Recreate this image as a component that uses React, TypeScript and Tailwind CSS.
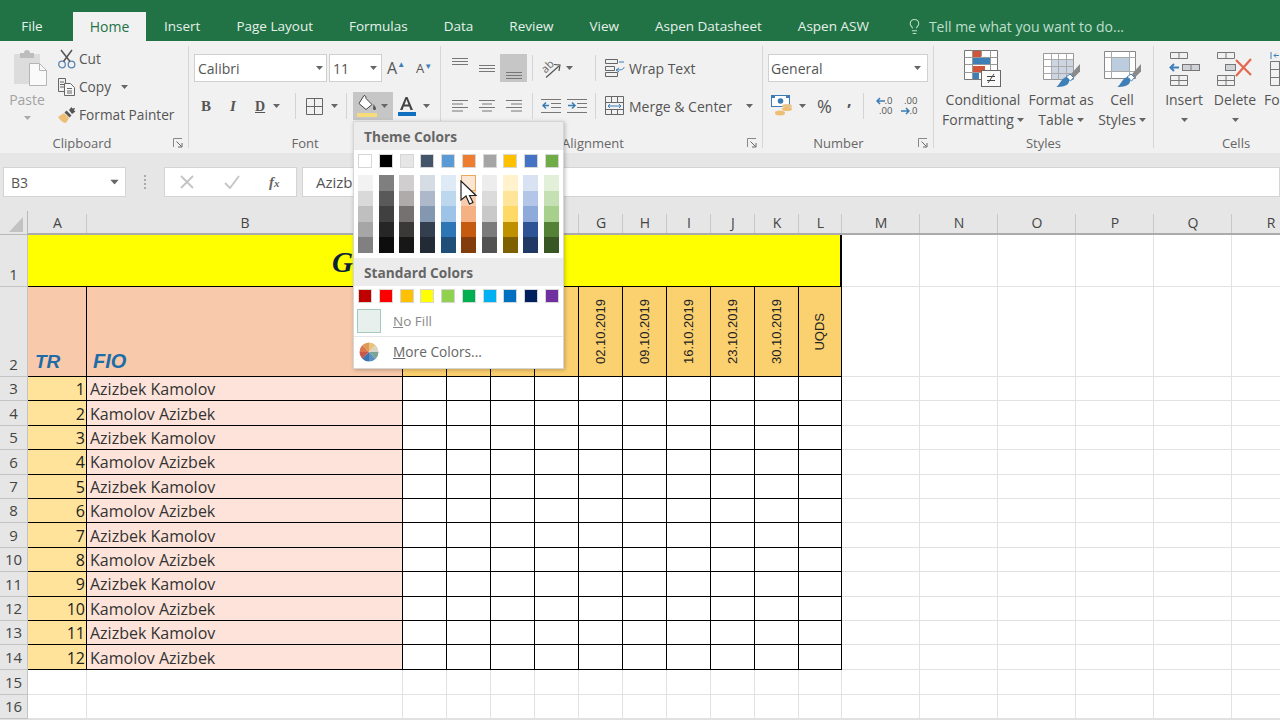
import { Lightbulb } from "lucide-react";
import type { ReactNode } from "react";

const tabs = ["Insert", "Page Layout", "Formulas", "Data", "Review", "View", "Aspen Datasheet", "Aspen ASW"];

const columns = ["A", "B", "C", "D", "E", "F", "G", "H", "I", "J", "K", "L", "M", "N", "O", "P", "Q", "R"];
const dates = ["02.10.2019", "09.10.2019", "16.10.2019", "23.10.2019", "30.10.2019", "UQDS"];
const blankCols = [0, 1, 2, 3, 4, 5, 6, 7, 8, 9];
const outerCols = [0, 1, 2, 3, 4, 5];
const dataRows = [1, 2, 3, 4, 5, 6, 7, 8, 9, 10, 11, 12];

const themeTop = ["bg-[#ffffff]", "bg-[#000000]", "bg-[#e7e6e6]", "bg-[#44546a]", "bg-[#5b9bd5]", "bg-[#ed7d31]", "bg-[#a5a5a5]", "bg-[#ffc000]", "bg-[#4472c4]", "bg-[#70ad47]"];
const themeShades = [
  ["bg-[#f2f2f2]", "bg-[#d9d9d9]", "bg-[#bfbfbf]", "bg-[#a6a6a6]", "bg-[#808080]"],
  ["bg-[#7f7f7f]", "bg-[#595959]", "bg-[#404040]", "bg-[#262626]", "bg-[#0d0d0d]"],
  ["bg-[#d0cece]", "bg-[#afabab]", "bg-[#767171]", "bg-[#3b3838]", "bg-[#181717]"],
  ["bg-[#d6dce4]", "bg-[#adb9ca]", "bg-[#8497b0]", "bg-[#333f4f]", "bg-[#222b35]"],
  ["bg-[#deeaf6]", "bg-[#bdd7ee]", "bg-[#9dc3e6]", "bg-[#2e75b5]", "bg-[#1f4e79]"],
  ["bg-[#fbe5d5]", "bg-[#f7cbac]", "bg-[#f4b183]", "bg-[#c55a11]", "bg-[#833c0b]"],
  ["bg-[#ededed]", "bg-[#dbdbdb]", "bg-[#c9c9c9]", "bg-[#7b7b7b]", "bg-[#525252]"],
  ["bg-[#fff2cc]", "bg-[#fee599]", "bg-[#ffd965]", "bg-[#bf9000]", "bg-[#7f6000]"],
  ["bg-[#d9e2f3]", "bg-[#b4c6e7]", "bg-[#8eaadb]", "bg-[#2f5496]", "bg-[#1f3864]"],
  ["bg-[#e2efd9]", "bg-[#c5e0b3]", "bg-[#a8d08d]", "bg-[#538135]", "bg-[#375623]"],
];
const standard = ["bg-[#c00000]", "bg-[#ff0000]", "bg-[#ffc000]", "bg-[#ffff00]", "bg-[#92d050]", "bg-[#00b050]", "bg-[#00b0f0]", "bg-[#0070c0]", "bg-[#002060]", "bg-[#7030a0]"];

function Caret({ className = "" }: { className?: string }) {
  return (
    <svg width="7" height="4" viewBox="0 0 7 4" className={"shrink-0 " + className}>
      <path d="M0 0h7L3.5 4z" fill="#666" />
    </svg>
  );
}

function Sep({ className = "" }: { className?: string }) {
  return <div className={"w-px h-[26px] bg-[#d4d4d4] shrink-0 " + className} />;
}

function Launcher({ className = "" }: { className?: string }) {
  return (
    <svg width="10" height="10" viewBox="0 0 10 10" className={"absolute " + className}>
      <path d="M.5 9V.5H9" fill="none" stroke="#888" />
      <path d="M3.5 3.5L8.5 8.5M9 5v4H5" fill="none" stroke="#666" />
    </svg>
  );
}

function Group({ className, label, labelClass = "", children }: { className: string; label: string; labelClass?: string; children: ReactNode }) {
  return (
    <div className={"relative flex flex-col shrink-0 h-[102px] border-r border-[#d6d6d6] " + className}>
      <div className="flex-1 min-h-0">{children}</div>
      <div className={"relative h-[18px] -mb-[4px] leading-[18px] text-[13px] text-[#666] text-center " + labelClass}>{label}</div>
    </div>
  );
}

function AlignLines({ kind, y = 0 }: { kind: "left" | "center" | "right" | "full"; y?: number }) {
  const rows = kind === "left"
    ? [[0, 16], [0, 11], [0, 16], [0, 11]]
    : kind === "center"
      ? [[0, 16], [3, 13], [0, 16], [3, 13]]
      : kind === "right"
        ? [[0, 16], [5, 16], [0, 16], [5, 16]]
        : [[0, 16], [0, 16], [0, 16]];
  return (
    <svg width="18" height="16" viewBox="0 0 18 16" className="shrink-0">
      {rows.map((r, i) => (
        <path key={i} d={`M${r[0] + 1} ${y + 2.5 + i * (kind === "full" ? 3 : 3.5)}H${r[1] + 1}`} stroke="#777" strokeWidth="1" />
      ))}
    </svg>
  );
}

function PasteIcon() {
  return (
    <svg width="36" height="40" viewBox="0 0 36 40">
      <rect x="1" y="5" width="26" height="30" fill="#dcdcdc" />
      <path d="M7 9V4h4a3 3 0 0 1 6 0h4v5z" fill="#bdbdbd" />
      <path d="M16.500 14.500h10l7 7v15h-17z" fill="#fafafa" stroke="#b5b5b5" />
      <path d="M26.500 14.500v7h7" fill="none" stroke="#b5b5b5" />
    </svg>
  );
}

function CutIcon() {
  return (
    <svg width="20" height="20" viewBox="0 0 20 20">
      <circle cx="5" cy="15.500" r="3.300" fill="none" stroke="#5b86b0" strokeWidth="1.300" />
      <circle cx="14.500" cy="15.500" r="3.300" fill="none" stroke="#5b86b0" strokeWidth="1.300" />
      <path d="M6.500 12.500L15 1M13 12.500L4 1" stroke="#555" strokeWidth="1.500" />
    </svg>
  );
}

function CopyIcon() {
  return (
    <svg width="20" height="20" viewBox="0 0 20 20" fill="none" stroke="#666">
      <path d="M1.500 1.500h7v13h-7zM3 5h4M3 7.500h4M3 10h4" />
      <path d="M7.500 6.500h6l4 4v8h-10z" fill="#f6f6f6" />
      <path d="M10 11.500h5M10 14h5M10 16h5" />
    </svg>
  );
}

function PainterIcon() {
  return (
    <svg width="20" height="18" viewBox="0 0 20 18">
      <path d="M1 11l6-4 5 5-3 5c-3 0-6-3-8-6z" fill="#edbf74" />
      <path d="M7.500 6.500l5 5 2-2-5-5z" fill="#555" />
      <path d="M12 4l2.500-3 1 1.500L18 2l-1 2.500 1.500 1L15 8z" fill="#555" />
    </svg>
  );
}

function BorderIcon() {
  return (
    <svg width="17" height="17" viewBox="0 0 17 17" fill="none" stroke="#666">
      <path d="M.5.500h16v16H.5zM8.500.5v16M.5 8.500h16" />
    </svg>
  );
}

function FillIcon() {
  return (
    <svg width="22" height="24" viewBox="0 0 22 24">
      <path d="M8 1.500c1.500 0 2 1 2 3l6 6-6 5-7-6z" fill="#fff" stroke="#444" />
      <path d="M17.500 10c1.500 2 2.500 3.500 2.500 4.500a1.500 1.500 0 0 1-3 0c0-1 .5-2.500.5-4.500z" fill="#555" />
      <rect x="1" y="19" width="20" height="4" fill="#f7dc7c" />
    </svg>
  );
}

function FontColorIcon() {
  return (
    <svg width="20" height="22" viewBox="0 0 20 22">
      <path d="M3 15L8.500 2h2L16 15h-2.500l-1.300-3.500H6.800L5.500 15zM7.600 9.500h3.800L9.500 4.500z" fill="#444" />
      <rect x="1" y="17" width="18" height="4" fill="#0f6fc0" />
    </svg>
  );
}

function OrientIcon() {
  return (
    <svg width="22" height="20" viewBox="0 0 22 20" fill="none" className="overflow-visible">
      <text x="1" y="13" transform="rotate(-45 6 10)" fontSize="11" fill="#666" stroke="none">ab</text>
      <path d="M5 19.500L18 8" stroke="#555" strokeWidth="1.200" />
      <path d="M13 6.500l6 .5-1 6" stroke="#555" strokeWidth="1.200" />
    </svg>
  );
}

function IndentIcon({ flip }: { flip?: boolean }) {
  return (
    <svg width="20" height="18" viewBox="0 0 20 18" fill="none">
      <path d="M0 2.500h20M10 6.500h10M10 10.500h10M0 15.500h20" stroke="#777" />
      {flip ? (
        <path d="M1 8.500h6M5 5.500l3 3-3 3" stroke="#3b7cb5" strokeWidth="1.500" />
      ) : (
        <path d="M8 8.500H2M5 5.500l-3 3 3 3" stroke="#3b7cb5" strokeWidth="1.500" />
      )}
    </svg>
  );
}

function WrapIcon() {
  return (
    <svg width="20" height="20" viewBox="0 0 20 20" fill="none" stroke="#666">
      <path d="M.5 1.500h12v4H.5zM.5 8.500h9v4h-9zM.5 14.500h12v4H.5z" />
      <path d="M14 4h5M19 9c0 2-2 3-7 3M14 10l-3 2 3 2" stroke="#3b7cb5" />
    </svg>
  );
}

function MergeIcon() {
  return (
    <svg width="20" height="20" viewBox="0 0 20 20" fill="none" stroke="#666">
      <path d="M.5.500h18v18H.5zM.5 6.500h18M.5 13.500h18M6.500.5v6M6.500 13.500v5M12.500.5v6M12.500 13.500v5" />
      <path d="M3 10h13M5 8l-2 2 2 2M14 8l2 2-2 2" stroke="#3b7cb5" />
    </svg>
  );
}

function AccountingIcon() {
  return (
    <svg width="22" height="22" viewBox="0 0 22 22">
      <rect x=".5" y=".5" width="18" height="11" fill="#fff" stroke="#3b7cb5" />
      <circle cx="9.500" cy="6" r="2.800" fill="#3b7cb5" />
      <path d="M1 1h3v2H1zM15 1h3v2h-3z" fill="#3b7cb5" />
      <ellipse cx="16" cy="11" rx="5" ry="2" fill="#e8c68b" />
      <ellipse cx="16" cy="14" rx="5" ry="2" fill="#edbf74" />
      <ellipse cx="9" cy="18" rx="5" ry="2.500" fill="#edbf74" />
    </svg>
  );
}

function DecimalIcon({ more }: { more?: boolean }) {
  const arrow = more ? "M9 4H1M4 1L1 4l3 3" : "M0 4h8M5 1l3 3-3 3";
  const top = more ? ".0" : ".00";
  const bottom = more ? ".00" : ".0";
  return (
    <div className="w-[20px] h-[20px] shrink-0 text-[9.500px] text-[#555] flex flex-col items-end">
      <div className="h-[10px] leading-[10px] flex items-center">
        {more && (
          <svg width="9" height="8" viewBox="0 0 9 8" fill="none" stroke="#3b7cb5" strokeWidth="1.500">
            <path d={arrow} />
          </svg>
        )}
        {top}
      </div>
      <div className="h-[10px] leading-[10px] flex items-center">
        {!more && (
          <svg width="9" height="8" viewBox="0 0 9 8" fill="none" stroke="#3b7cb5" strokeWidth="1.500">
            <path d={arrow} />
          </svg>
        )}
        {bottom}
      </div>
    </div>
  );
}

function ConditionalIcon() {
  return (
    <svg width="40" height="38" viewBox="0 0 40 38">
      <path d="M1.500.500h33v29h-33z" fill="#fff" stroke="#777" />
      <rect x="10" y="1" width="8" height="6" fill="#d2553a" />
      <rect x="10" y="8" width="17" height="6" fill="#3f7fb8" />
      <rect x="10" y="16" width="12" height="6" fill="#d2553a" />
      <rect x="10" y="23" width="6" height="6" fill="#3f7fb8" />
      <path d="M1.500 7.500h33M1.500 14.500h33M1.500 22.500h33M9.500.5v29M18.500.5v6M27.500.5v29" fill="none" stroke="#999" />
      <rect x="18.500" y="20.500" width="19" height="16" fill="#fafafa" stroke="#666" />
      <path d="M24 26.500h8M24 30.500h8M31 24l-6 9" stroke="#444" fill="none" />
    </svg>
  );
}

function BrushTail() {
  return (
    <>
      <path d="M29 24l9-10 1.500 6-8 8z" fill="#8a8a8a" />
      <path d="M24 27l4-3 3.500 3.500-3 3.500z" fill="#fff" stroke="#3f7fb8" />
      <path d="M14 37c3-1 4-6 8-9 3-2 6 1 5 4-1 4-7 5-13 5z" fill="#3f7fb8" />
    </>
  );
}

function TableStyleIcon() {
  return (
    <svg width="38" height="38" viewBox="0 0 38 38">
      <path d="M1.500 3.500h30v26h-30z" fill="#fff" stroke="#999" />
      <rect x="9" y="10" width="22" height="19" fill="#cdd4e2" />
      <path d="M1.500 9.500h30M1.500 16.500h30M1.500 23.500h30M9.500 3.500v26M16.500 3.500v26M24.500 3.500v26" fill="none" stroke="#aaa" />
      <BrushTail />
    </svg>
  );
}

function CellStyleIcon() {
  return (
    <svg width="38" height="38" viewBox="0 0 38 38">
      <path d="M1.500 1.500h31v27h-31z" fill="#fff" stroke="#888" />
      <rect x="8" y="7" width="18" height="14" fill="#bdcde0" />
      <path d="M8.500 1.500v27M26.500 1.500v27M1.500 7.500h31M1.500 21.500h31" fill="none" stroke="#aaa" />
      <BrushTail />
    </svg>
  );
}

function InsertIcon() {
  return (
    <svg width="34" height="36" viewBox="0 0 34 36" fill="none">
      <path d="M3.500 1.500h17v6h-17zM12 1.500v6M3.500 24.500h17v10h-17zM3.500 29.500h17M12 24.500v10" stroke="#777" />
      <rect x="15.500" y="13.500" width="17" height="6" fill="#cfd3d8" stroke="#777" />
      <path d="M24 13.500v6" stroke="#777" />
      <path d="M12 16.500H4M7 13l-3.500 3.500L7 20" stroke="#3f7fb8" strokeWidth="2" />
    </svg>
  );
}

function DeleteIcon() {
  return (
    <svg width="38" height="36" viewBox="0 0 38 36" fill="none">
      <path d="M1.500 1.500h17v6h-17zM10 1.500v6M1.500 24.500h17v10h-17zM1.500 29.500h17M10 24.500v10" stroke="#777" />
      <rect x="9.500" y="13.500" width="10" height="6" fill="#cfd3d8" stroke="#777" />
      <path d="M20 9l15 15M35 8L20 25" stroke="#e2684f" strokeWidth="2.200" />
    </svg>
  );
}

function FormatCellsIcon() {
  return (
    <svg width="30" height="38" viewBox="0 0 30 38" fill="none">
      <path d="M1 2v7M4 5.500h5M4 5.500l2-2M4 5.500l2 2" stroke="#3f7fb8" />
      <path d="M.5 11.500h28v24H.5zM.5 19.500h28M.5 27.500h28M9.500 11.500v24" stroke="#777" />
    </svg>
  );
}

function BigButton({ className, icon, lines, caretLine }: { className: string; icon: ReactNode; lines: string[]; caretLine?: boolean }) {
  return (
    <div className={"flex flex-col items-center shrink-0 whitespace-nowrap " + className}>
      <div className="h-[38px] mt-[4px] mb-[2px] flex items-center justify-center">{icon}</div>
      {lines.map((line, i) => (
        <div key={i} className="h-[20px] leading-[20px] flex items-center gap-[3px]">
          {line}
          {i === lines.length - 1 && caretLine && <Caret />}
        </div>
      ))}
      {!caretLine && (
        <div className="h-[20px] flex items-center">
          <Caret />
        </div>
      )}
    </div>
  );
}

function Ribbon() {
  return (
    <div className="flex h-[112px] pt-[5px] bg-[#f1f1f1] text-[14px] text-[#555] overflow-hidden">
      <Group className="w-[189px]" label="Clipboard" labelClass="pr-[24px]">
        <div className="flex">
          <div className="w-[52px] flex flex-col items-center pl-[3px] text-[#a3a3a3]">
            <div className="h-[40px] mt-[3px] ml-[7px]">
              <PasteIcon />
            </div>
            <div className="h-[20px] leading-[20px] mt-[1px] -ml-[1px]">Paste</div>
            <Caret className="mt-[6px] opacity-50" />
          </div>
          <div className="flex flex-col -mt-[1px] ml-[5px] text-[13.700px]">
            <div className="h-[28px] flex items-center gap-[2px]">
              <CutIcon />
              Cut
            </div>
            <div className="h-[28px] flex items-center gap-[2px]">
              <CopyIcon />
              Copy
              <Caret className="ml-[8px]" />
            </div>
            <div className="h-[28px] flex items-center gap-[2px]">
              <PainterIcon />
              Format Painter
            </div>
          </div>
        </div>
        <Launcher className="left-[173px] top-[92px]" />
      </Group>

      <Group className="w-[252px]" label="Font" labelClass="pr-[19px]">
        <div className="pt-[8px] flex flex-col gap-[10px]">
          <div className="flex h-[28px] items-center pl-[5px]">
            <div className="w-[133px] h-[28px] bg-white border border-[#d0d0d0] flex items-center justify-between pl-[3px] pr-[3px]">
              Calibri
              <Caret />
            </div>
            <div className="w-[53px] h-[28px] ml-[2px] bg-white border border-[#d0d0d0] flex items-center justify-between pl-[3px] pr-[4px]">
              11
              <Caret />
            </div>
            <div className="ml-[5px] text-[16px] leading-none flex items-start">
              A<span className="text-[8px] text-[#3f7fb8] leading-none">▲</span>
            </div>
            <div className="ml-[11px] text-[13px] leading-none flex items-start">
              A<span className="text-[8px] text-[#3f7fb8] leading-none">▼</span>
            </div>
          </div>
          <div className="flex h-[28px] items-center pl-[4px]">
            <div className="w-[26px] text-center font-bold font-['Liberation_Serif',serif] text-[15px]">B</div>
            <div className="w-[28px] text-center italic font-bold font-['Liberation_Serif',serif] text-[15px]">I</div>
            <div className="w-[48px] flex items-center pl-[8px] gap-[8px]">
              <span className="font-bold underline text-[14px] font-['Liberation_Serif',serif]">D</span>
              <Caret />
            </div>
            <Sep />
            <div className="w-[50px] flex items-center pl-[10px] gap-[8px]">
              <BorderIcon />
              <Caret />
            </div>
            <Sep className="mr-[6px]" />
            <div className="w-[40px] h-[28px] bg-[#c6c6c6] flex items-center pl-[3px] gap-[3px]">
              <FillIcon />
              <Caret />
            </div>
            <div className="flex items-center pl-[4px] gap-[6px]">
              <FontColorIcon />
              <Caret />
            </div>
          </div>
        </div>
      </Group>

      <Group className="w-[322px]" label="Alignment" labelClass="pr-[17px]">
        <div className="pt-[8px] flex flex-col gap-[10px]">
          <div className="flex h-[28px] items-center pl-[5px]">
            <div className="w-[27px] h-[28px] flex items-start justify-center pt-[2px]">
              <AlignLines kind="full" />
            </div>
            <div className="w-[27px] h-[28px] flex items-center justify-center">
              <AlignLines kind="full" y={3} />
            </div>
            <div className="w-[27px] h-[28px] bg-[#c6c6c6] flex items-end justify-center">
              <AlignLines kind="full" y={4} />
            </div>
            <Sep className="ml-[5px]" />
            <div className="w-[62px] flex items-center pl-[8px] gap-[3px]">
              <OrientIcon />
              <Caret />
            </div>
            <Sep />
            <div className="ml-[9px] flex items-center gap-[4px]">
              <WrapIcon />
              Wrap Text
            </div>
          </div>
          <div className="flex h-[28px] items-center pl-[5px]">
            <div className="w-[27px] flex justify-center">
              <AlignLines kind="left" />
            </div>
            <div className="w-[27px] flex justify-center">
              <AlignLines kind="center" />
            </div>
            <div className="w-[27px] flex justify-center">
              <AlignLines kind="right" />
            </div>
            <Sep className="ml-[5px]" />
            <div className="w-[62px] flex items-center pl-[8px] gap-[6px]">
              <IndentIcon />
              <IndentIcon flip />
            </div>
            <Sep />
            <div className="ml-[9px] flex items-center gap-[4px]">
              <MergeIcon />
              Merge &amp; Center
              <Caret className="ml-[10px]" />
            </div>
          </div>
        </div>
        <Launcher className="left-[306px] top-[92px]" />
      </Group>

      <Group className="w-[171px]" label="Number" labelClass="pr-[19px]">
        <div className="pt-[8px] flex flex-col gap-[10px]">
          <div className="flex h-[28px] items-center pl-[5px]">
            <div className="w-[160px] h-[28px] bg-white border border-[#d0d0d0] flex items-center justify-between pl-[2px] pr-[6px]">
              General
              <Caret />
            </div>
          </div>
          <div className="flex h-[28px] items-center pl-[8px]">
            <AccountingIcon />
            <Caret className="ml-[6px]" />
            <span className="ml-[11px] text-[18px] leading-none">%</span>
            <span className="ml-[15px] text-[16px] font-bold leading-none -mt-[12px]">,</span>
            <Sep className="ml-[12px]" />
            <div className="ml-[8px]">
              <DecimalIcon more />
            </div>
            <div className="ml-[5px]">
              <DecimalIcon />
            </div>
          </div>
        </div>
        <Launcher className="left-[155px] top-[92px]" />
      </Group>

      <Group className="w-[220px]" label="Styles">
        <div className="flex pl-[5px]">
          <BigButton className="w-[88px]" icon={<ConditionalIcon />} lines={["Conditional", "Formatting"]} caretLine />
          <BigButton className="w-[68px]" icon={<TableStyleIcon />} lines={["Format as", "Table"]} caretLine />
          <BigButton className="w-[54px]" icon={<CellStyleIcon />} lines={["Cell", "Styles"]} caretLine />
        </div>
      </Group>

      <Group className="w-[164px] border-r-0" label="Cells">
        <div className="flex pl-[8px]">
          <BigButton className="w-[44px]" icon={<InsertIcon />} lines={["Insert"]} />
          <BigButton className="w-[44px] ml-[7px]" icon={<DeleteIcon />} lines={["Delete"]} />
          <div className="flex flex-col ml-[7px] items-start">
            <div className="h-[38px] mt-[4px] mb-[2px] pl-[6px] flex items-center">
              <FormatCellsIcon />
            </div>
            <div className="h-[20px] leading-[20px]">Format</div>
          </div>
        </div>
      </Group>
    </div>
  );
}

function FormulaBar() {
  return (
    <div className="bg-[#e6e6e6] h-[58px] pt-[14px] text-[#555]">
      <div className="h-[30px] flex items-stretch">
        <div className="ml-[3px] w-[123px] bg-white border border-[#d4d4d4] flex items-center justify-between pl-[7px] pr-[7px] text-[14px]">
          B3
          <Caret className="scale-125" />
        </div>
        <div className="w-[38px] flex flex-col items-center justify-center gap-[2px]">
          <div className="w-[2px] h-[2px] bg-[#aaa]" />
          <div className="w-[2px] h-[2px] bg-[#aaa]" />
          <div className="w-[2px] h-[2px] bg-[#aaa]" />
          <div className="w-[2px] h-[2px] bg-[#aaa]" />
        </div>
        <div className="w-[133px] bg-white border border-[#d4d4d4] flex items-center pl-[15px]">
          <svg width="14" height="14" viewBox="0 0 14 14" fill="none" stroke="#c4c4c4" strokeWidth="1.800">
            <path d="M1 1l12 12M13 1L1 13" />
          </svg>
          <svg width="16" height="14" viewBox="0 0 16 14" fill="none" stroke="#c4c4c4" strokeWidth="1.800" className="ml-[30px]">
            <path d="M1 8l5 5 9-12" />
          </svg>
          <span className="ml-[29px] italic font-bold text-[15px] text-[#666] font-['Liberation_Serif',serif]">
            f<span className="text-[11px]">x</span>
          </span>
        </div>
        <div className="ml-[5px] flex-1 bg-white border border-[#d4d4d4] flex items-center pl-[13px] text-[15px]">Azizbek Kamolov</div>
      </div>
    </div>
  );
}

function RowHead({ n }: { n: number }) {
  return <div className="bg-[#e6e6e6] border-r border-b border-[#c4c4c4] flex items-end justify-center text-[15px] leading-[23px] text-[#444]">{n}</div>;
}

function Sheet() {
  return (
    <div className="grid w-[1310px] grid-cols-[28px_59px_316px_44px_44px_44px_44px_44px_44px_44px_44px_44px_43px_78px_78px_78px_78px_78px_78px] grid-rows-[24px_52px_90px_repeat(12,24.42px)_25px_24px] text-[16px] text-[#333]">
      <div className="bg-[#e6e6e6] border-r border-b border-[#b8b8b8] flex items-end justify-end pr-[4px] pb-[2px]">
        <svg width="14" height="15" viewBox="0 0 14 15">
          <path d="M14 0v15H0z" fill="#c2c2c2" />
        </svg>
      </div>
      {columns.map((c) => (
        <div key={c} className="bg-[#e6e6e6] border-b-2 border-[#ababab] flex items-center justify-center relative text-[14px] text-[#444]">
          {c}
          <div className="absolute right-0 top-[3px] bottom-0 w-px bg-[#c8c8c8]" />
        </div>
      ))}

      <RowHead n={1} />
      <div className="col-span-12 bg-[#ffff00] border-b border-black border-r-2 flex items-center pl-[304px] pt-[3px]">
        <span className="font-['Liberation_Serif',serif] font-bold italic text-[29px] leading-none text-[#0b1f3a]">G</span>
      </div>
      {outerCols.map((i) => (
        <div key={i} className="bg-white border-r border-b border-[#e2e2e2]" />
      ))}

      <RowHead n={2} />
      <div className="bg-[#f8c9ab] border-r border-b border-black flex items-end pl-[7px] font-['Liberation_Sans',sans-serif] font-bold italic text-[19px] text-[#1c6ca8]">TR</div>
      <div className="bg-[#f8c9ab] border-r border-b border-black flex items-end pl-[6px] font-['Liberation_Sans',sans-serif] font-bold italic text-[20px] text-[#1c6ca8]">FIO</div>
      {[0, 1, 2, 3].map((i) => (
        <div key={i} className="bg-[#fbd06f] border-r border-b border-black" />
      ))}
      {dates.map((d) => (
        <div key={d} className="bg-[#fbd06f] border-r border-b border-black flex items-center justify-center font-['Liberation_Sans',sans-serif] text-[13px] text-[#222]">
          <span className="[writing-mode:vertical-rl] rotate-180">{d}</span>
        </div>
      ))}
      {outerCols.map((i) => (
        <div key={i} className="bg-white border-r border-b border-[#e2e2e2]" />
      ))}

      {dataRows.map((n) => (
        <div key={n} className="contents">
          <RowHead n={n + 2} />
          <div className="bg-[#ffe39b] border-r border-b border-black flex items-center justify-end pr-[1px] pt-[1px] text-[#222]">{n}</div>
          <div className="bg-[#fde3d9] border-r border-b border-black flex items-center pl-[3px] pt-[1px]">{n % 2 === 1 ? "Azizbek Kamolov" : "Kamolov Azizbek"}</div>
          {blankCols.map((i) => (
            <div key={i} className="bg-white border-r border-b border-black" />
          ))}
          {outerCols.map((i) => (
            <div key={i} className="bg-white border-r border-b border-[#e2e2e2]" />
          ))}
        </div>
      ))}

      {[15, 16].map((n) => (
        <div key={n} className="contents">
          <RowHead n={n} />
          {columns.map((c) => (
            <div key={c} className="bg-white border-r border-b border-[#e2e2e2]" />
          ))}
        </div>
      ))}
    </div>
  );
}

function ColorMenu() {
  return (
    <div className="absolute left-[353px] top-[121px] w-[211px] h-[248px] bg-white border border-[#d6d6d6] shadow-[1px_1px_4px_rgba(0,0,0,0.25)] text-[#666] text-[13.500px]">
      <div className="h-[28px] bg-[#ececec] flex items-center pl-[10px] pt-[3px] font-bold text-[13.700px]">Theme Colors</div>
      <div className="grid grid-cols-10 w-[207px] ml-[1px] mt-[4px] justify-items-center">
        {themeTop.map((c, i) => (
          <div key={i} className={"w-[14px] h-[14px] border border-[#d6d6d6] " + c} />
        ))}
      </div>
      <div className="grid grid-cols-10 w-[207px] ml-[1px] mt-[7px] justify-items-center">
        {themeShades.map((col, i) => (
          <div key={i} className="flex flex-col w-[15px]">
            {col.map((c, j) => (
              <div key={j} className={"h-[15.600px] " + c + (i === 5 && j === 0 ? " border border-[#e8a95a]" : "")} />
            ))}
          </div>
        ))}
      </div>
      <div className="h-[28px] mt-[5px] bg-[#ececec] flex items-center pl-[10px] pt-[2px] font-bold text-[13.700px]">Standard Colors</div>
      <div className="grid grid-cols-10 w-[207px] ml-[1px] mt-[3px] justify-items-center">
        {standard.map((c, i) => (
          <div key={i} className={"w-[14px] h-[14px] border border-[#d6d6d6] " + c} />
        ))}
      </div>
      <div className="flex items-center h-[24px] mt-[6px] pl-[3px]">
        <div className="w-[24px] h-[24px] bg-[#e8f0ee] border border-[#a3cbb9]" />
        <span className="ml-[12px] text-[#8a8a8a]">
          <span className="underline">N</span>o Fill
        </span>
      </div>
      <div className="h-px bg-[#e6e6e6] mt-[3px]" />
      <div className="flex items-center h-[30px] pl-[5px]">
        <svg width="20" height="20" viewBox="0 0 20 20">
          <path d="M10 10V.5a9.500 9.500 0 0 1 6.700 2.800z" fill="#e8c37d" />
          <path d="M10 10l6.700-6.700A9.500 9.500 0 0 1 19.500 10z" fill="#d9d4c4" />
          <path d="M10 10h9.500a9.500 9.500 0 0 1-3 7z" fill="#7aa594" />
          <path d="M10 10l6.500 7a9.500 9.500 0 0 1-6.500 2.500z" fill="#5b8fc4" />
          <path d="M10 10v9.500a9.500 9.500 0 0 1-7-3z" fill="#3c74b0" />
          <path d="M10 10l-7 6.500A9.500 9.500 0 0 1 .5 10z" fill="#c9584a" />
          <path d="M10 10H.5a9.500 9.500 0 0 1 3-7z" fill="#d9774f" />
          <path d="M10 10L3.500 3A9.500 9.500 0 0 1 10 .5z" fill="#e09a55" />
        </svg>
        <span className="ml-[14px] text-[13.700px]">
          <span className="underline">M</span>ore Colors...
        </span>
      </div>
    </div>
  );
}

export default function App() {
  return (
    <div className="relative w-[1280px] h-[720px] overflow-hidden bg-[#e0e0e0] font-['Open_Sans',sans-serif]">
      <div className="h-[41px] bg-[#217346] flex items-end text-[13.500px] text-[#e6f1ea]">
        <div className="w-[64px] mr-[9px] h-[29px] flex items-center justify-center">File</div>
        <div className="w-[73px] h-[29px] bg-[#f1f1f1] text-[#217346] flex items-center justify-center text-[14px]">Home</div>
        {tabs.map((t) => (
          <div key={t} className="h-[29px] px-[18px] flex items-center whitespace-nowrap">
            {t}
          </div>
        ))}
        <div className="h-[29px] ml-[19px] flex items-center gap-[6px] text-[#bfdfcc] text-[14px]">
          <Lightbulb size={17} strokeWidth={1.500} />
          Tell me what you want to do...
        </div>
      </div>
      <Ribbon />
      <FormulaBar />
      <Sheet />
      <ColorMenu />
      <svg width="18" height="26" viewBox="0 0 18 26" className="absolute left-[460px] top-[180px]">
        <path d="M1 1v19l5-4 3.500 8 3.500-1.500L9.500 15.500H16z" fill="#fff" stroke="#222" strokeWidth="1.200" />
      </svg>
    </div>
  );
}
